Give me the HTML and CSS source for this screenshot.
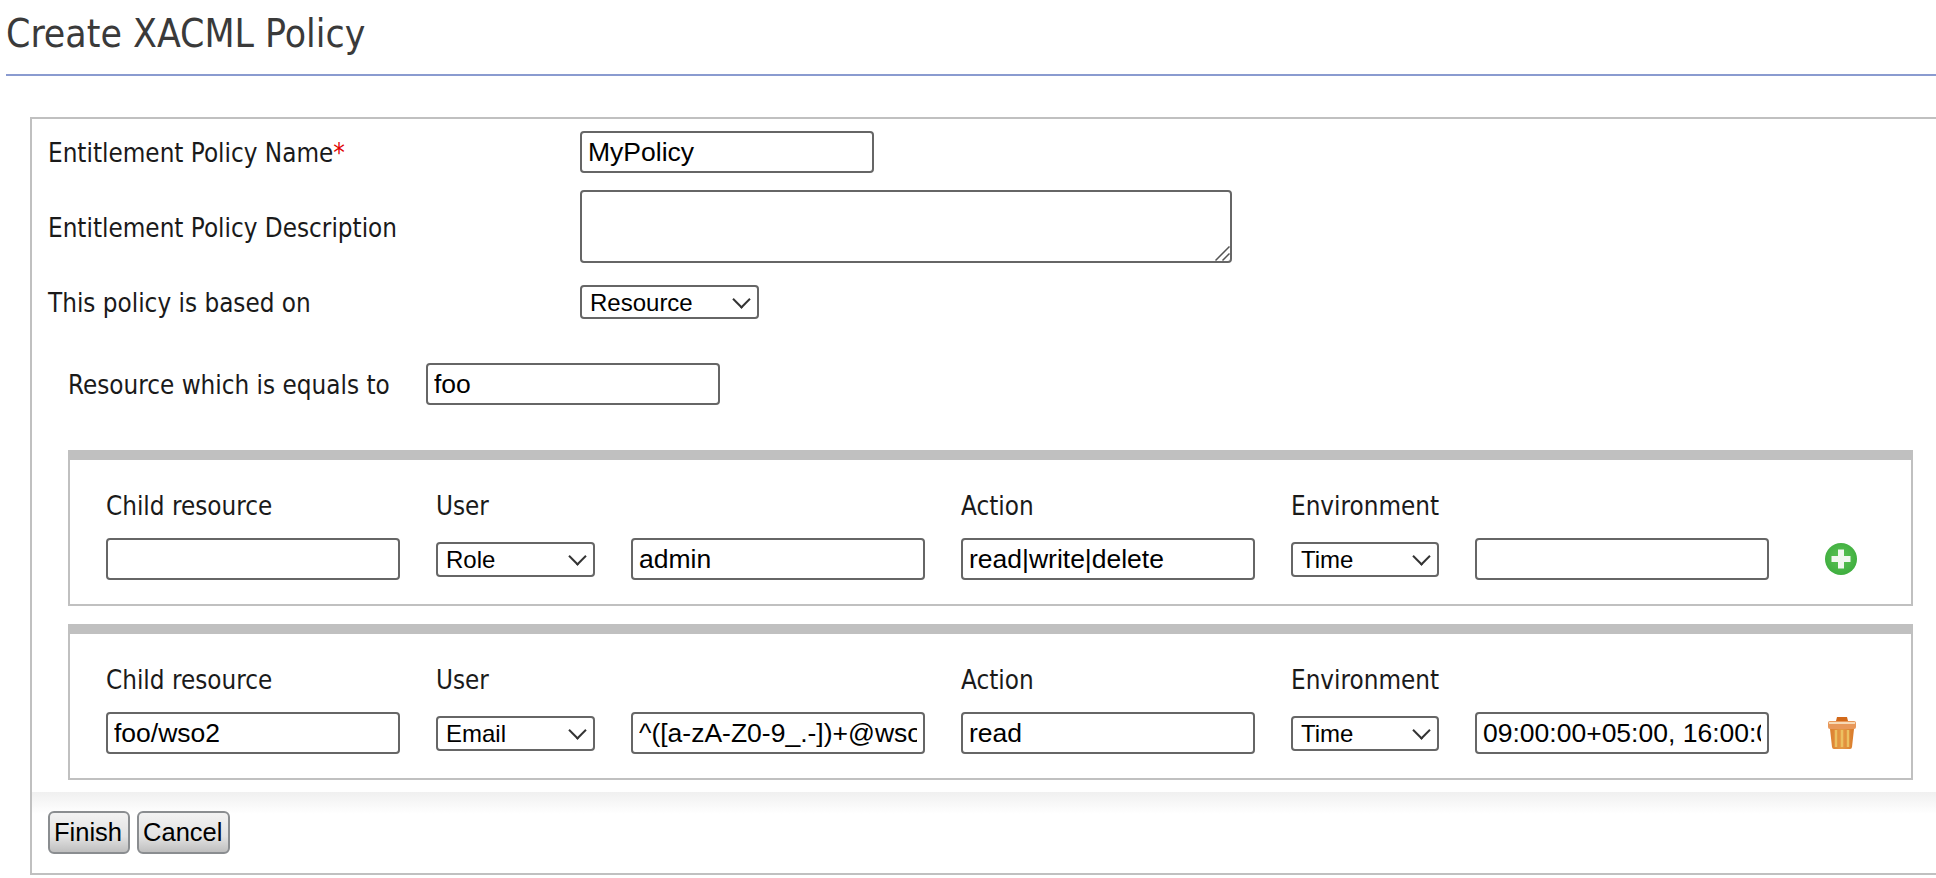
FILE: index.html
```html
<!DOCTYPE html>
<html>

<head>
  <title>Create XACML Policy</title>
  <meta charset="utf-8" />
  <link rel="stylesheet" href="styles.css">
</head>

<body>
  <h1 class="page-title">Create XACML Policy</h1>
  <form class="policy-box">
    <div class="policy-body">
      <div class="field-row name-row">
        <label class="field-label">Entitlement Policy Name<span class="required">*</span></label>
        <input class="text-input" type="text" value="MyPolicy">
      </div>
      <div class="field-row desc-row">
        <label class="field-label">Entitlement Policy Description</label>
        <span class="area-wrap">
          <textarea class="text-area"></textarea>
          <svg class="area-grip" viewBox="0 0 15 15"><path d="M.500 14.500L14.500.500M7.500 14.500l7-7" stroke="#555" stroke-width="1.500" fill="none" /></svg>
        </span>
      </div>
      <div class="field-row based-row">
        <label class="field-label">This policy is based on</label>
        <span class="select-wrap based-select"><select><option>Resource</option></select></span>
      </div>
      <div class="resource-row">
        <label class="resource-label">Resource which is equals to</label>
        <input class="text-input" type="text" value="foo">
      </div>

      <div class="rule-panel">
        <span class="col-label">Child resource</span>
        <span class="col-label span-two">User</span>
        <span class="col-label">Action</span>
        <span class="col-label span-two">Environment</span>
        <span></span>
        <input class="text-input" type="text" value="">
        <span class="select-wrap"><select><option>Role</option></select></span>
        <input class="text-input" type="text" value="admin">
        <input class="text-input" type="text" value="read|write|delete">
        <span class="select-wrap"><select><option>Time</option></select></span>
        <input class="text-input" type="text" value="">
        <svg class="row-icon add-icon" viewBox="0 0 32 32">
          <defs>
            <radialGradient id="addFill" cx="50%" cy="45%" r="55%">
              <stop offset="0%" stop-color="#5cc455" />
              <stop offset="100%" stop-color="#3fae3f" />
            </radialGradient>
          </defs>
          <circle cx="16" cy="16" r="16" fill="url(#addFill)" />
          <path d="M13 6.500h6v6.500h6.500v6H19v6.500h-6V19H6.500v-6H13z" fill="#f2f8f0" />
        </svg>
      </div>

      <div class="rule-panel">
        <span class="col-label">Child resource</span>
        <span class="col-label span-two">User</span>
        <span class="col-label">Action</span>
        <span class="col-label span-two">Environment</span>
        <span></span>
        <input class="text-input" type="text" value="foo/wso2">
        <span class="select-wrap"><select><option>Email</option></select></span>
        <input class="text-input" type="text" value="^([a-zA-Z0-9_.-])+@wso2.com">
        <input class="text-input" type="text" value="read">
        <span class="select-wrap"><select><option>Time</option></select></span>
        <input class="text-input" type="text" value="09:00:00+05:00, 16:00:00+05:00">
        <svg class="row-icon trash-icon" viewBox="0 0 28 32">
          <defs>
            <linearGradient id="canFill" x1="0" x2="1" y1="0" y2="0">
              <stop offset="0%" stop-color="#dc8030" />
              <stop offset="50%" stop-color="#e59a45" />
              <stop offset="100%" stop-color="#d97a2a" />
            </linearGradient>
          </defs>
          <path d="M9 0h10l1 4H8z" fill="#d2691a" />
          <rect x="0" y="4" width="28" height="8" rx="2" fill="#e8985a" />
          <rect x="1" y="5" width="26" height="2" fill="#f7d9b5" />
          <path d="M2 12h24l-2 18q-.2 2-2 2H6q-1.800 0-2-2z" fill="url(#canFill)" />
          <path d="M8 13v17M14 13v17M20 13v17" stroke="#ecc061" stroke-width="2.500" />
        </svg>
      </div>
    </div>

    <div class="policy-footer">
      <button class="form-button" type="button">Finish</button>
      <button class="form-button" type="button">Cancel</button>
    </div>
  </form>
</body>

</html>
```

FILE: styles.css
```css
* {
  box-sizing: border-box;
}
html,
body {
  overflow: hidden;
}
body {
  margin: 0;
  padding: 0;
  height: 878px;
  background: #fff;
  color: #1a1a1a;
  font-family: 'DejaVu Sans Condensed', 'DejaVu Sans', sans-serif;
  font-size: 25.800px;
}
.page-title {
  margin: 0 0 41px 6px;
  height: 76px;
  padding-top: 11px;
  border-bottom: 2px solid #8a9bd0;
  color: #3a3a3a;
  font-size: 38.800px;
  line-height: 46px;
  font-weight: normal;
}
.policy-box {
  width: 1930px;
  margin-left: 30px;
  border: 2px solid #c0c0c0;
  height: 758px;
}
.policy-body {
  height: 673px;
  padding: 12px 0 0 16px;
}
.field-row {
  display: flex;
  align-items: center;
}
.field-label {
  width: 532px;
  padding-top: 2px;
}
.required {
  color: #e00000;
}
.desc-row {
  margin-top: 17px;
}
.based-row {
  margin-top: 22px;
}
.resource-row {
  display: flex;
  align-items: center;
  margin: 44px 0 45px 20px;
}
.resource-label {
  width: 358px;
  padding-top: 2px;
}
.text-input,
.text-area {
  display: block;
  width: 294px;
  height: 42px;
  padding: 0 6px;
  border: 2px solid #666;
  border-radius: 4px;
  background: #fff;
  color: #000;
  font-family: 'Liberation Sans', Arial, sans-serif;
  font-size: 26.500px;
  outline: none;
}
.area-wrap {
  position: relative;
  display: block;
}
.text-area {
  width: 652px;
  height: 73px;
  resize: none;
}
.area-grip {
  position: absolute;
  right: 2px;
  bottom: 2px;
  width: 15px;
  height: 15px;
}
.select-wrap {
  position: relative;
  display: block;
  width: 100%;
  height: 35px;
}
.based-select {
  width: 179px;
  height: 34px;
}
.select-wrap select {
  display: block;
  width: 100%;
  height: 100%;
  padding: 0 0 0 8px;
  border: 2px solid #666;
  border-radius: 4px;
  background: #fff;
  color: #000;
  font-family: 'Liberation Sans', Arial, sans-serif;
  font-size: 24px;
  appearance: none;
  -webkit-appearance: none;
}
.select-wrap::after {
  content: '';
  position: absolute;
  right: 11px;
  top: 8px;
  width: 11px;
  height: 11px;
  border-right: 2px solid #333;
  border-bottom: 2px solid #333;
  transform: rotate(45deg);
  pointer-events: none;
}
.rule-panel {
  display: grid;
  grid-template-columns: 294px 159px 294px 294px 148px 294px auto;
  column-gap: 36px;
  row-gap: 18px;
  align-items: center;
  width: 1845px;
  margin: 0 0 18px 20px;
  padding: 31px 0 24px 36px;
  border: 2px solid #c0c0c0;
  border-top-width: 10px;
}
.col-label {
  height: 29px;
  padding-top: 1px;
  line-height: 29px;
}
.span-two {
  grid-column: span 2;
}
.row-icon {
  display: block;
  margin-left: 20px;
  filter: blur(0.4px);
}
.add-icon {
  width: 32px;
  height: 32px;
}
.trash-icon {
  width: 28px;
  height: 32px;
  margin-left: 23px;
}
.policy-footer {
  display: flex;
  gap: 7px;
  height: 81px;
  padding: 19px 0 0 16px;
  background: linear-gradient(#f0f0f0, #fff 22px);
}
.form-button {
  height: 43px;
  padding: 0 6px 0 4px;
  border: 2px solid #8a8d90;
  border-radius: 6px;
  background: linear-gradient(#f2f2f2, #e2e2e2 60%, #bfbfbf);
  color: #000;
  font-family: 'Liberation Sans', Arial, sans-serif;
  font-size: 25.500px;
}
```
